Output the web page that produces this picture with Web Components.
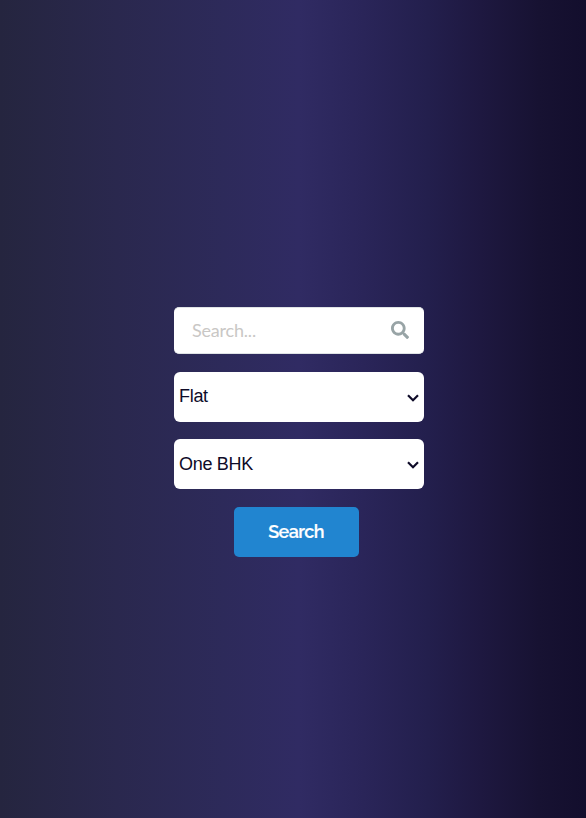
<!DOCTYPE html>
<html lang="en">
<head>
<meta charset="utf-8">
<title>Search</title>
<style>
html, body { margin: 0; height: 100%; }
body { overflow: hidden; background: #24243e; }
</style>
</head>
<body>
<search-panel>
  <search-field placeholder="Search..."></search-field>
  <option-field style="--lift: -3px">Flat</option-field>
  <option-field>One BHK</option-field>
  <submit-button>Search</submit-button>
</search-panel>
<script>
function define(name, html) {
  const template = document.createElement('template');
  template.innerHTML = html;
  customElements.define(name, class extends HTMLElement {
    constructor() {
      super();
      this.attachShadow({ mode: 'open' }).append(template.content.cloneNode(true));
    }
    connectedCallback() {
      const label = this.shadowRoot.querySelector('.placeholder');
      if (label) label.textContent = this.getAttribute('placeholder');
    }
  });
}

define('search-panel', `
<style>
:host { display: block; box-sizing: border-box; height: 818px; padding: 307px 162px 0 174px;
  background: linear-gradient(to right, #25253f 0%, #2a284e 20%, #2d2a5a 38%, #302b63 51%, #2a2559 62%, #231f4d 73%, #1e1840 82%, #171232 92%, #130e2d 100%); }
.stack { display: flex; flex-direction: column; }
</style>
<div class="stack"><slot></slot></div>`);

define('search-field', `
<style>
:host { display: flex; align-items: center; justify-content: space-between; box-sizing: border-box;
  width: 250px; height: 47px; margin-bottom: 18px; padding: 0 15px 0 18px;
  background: #fff; border: 1px solid #dfe3e5; border-width: 1px 0; border-radius: 5px;
  font: 18px/24px Lato, sans-serif; color: #c9c7c5; }
.placeholder { letter-spacing: -0.2px; margin-top: -2px; }
svg { display: block; width: 18px; height: 18px; margin-top: -1px; }
</style>
<span class="placeholder"></span>
<svg viewBox="0 0 512 512" fill="#98a4a6"><path d="M505 442.700 405.300 343c-4.500-4.500-10.600-7-17-7H372c27.600-35.300 44-79.700 44-128C416 93.100 322.900 0 208 0S0 93.100 0 208s93.100 208 208 208c48.300 0 92.700-16.400 128-44v16.300c0 6.400 2.500 12.500 7 17l99.700 99.700c9.400 9.400 24.600 9.400 33.900 0l28.300-28.300c9.400-9.400 9.400-24.600.1-34zM208 336c-70.700 0-128-57.200-128-128S137.200 80 208 80s128 57.200 128 128-57.200 128-128 128z"/></svg>`);

define('option-field', `
<style>
:host { display: flex; align-items: center; justify-content: space-between; box-sizing: border-box;
  width: 250px; height: 50px; margin-bottom: 17px; padding: 0 5px;
  background: #fff; border-radius: 6px;
  font: 18px/20px "Liberation Sans", Arial, sans-serif; letter-spacing: -0.3px; color: #0e0b28; }
:host(:nth-of-type(2)) { margin-bottom: 18px; }
.value { margin-top: var(--lift, -1px); }
svg { display: block; width: 12px; height: 8px; margin-top: 2px; }
</style>
<span class="value"><slot></slot></span>
<svg viewBox="0 0 12 8" fill="none" stroke="#0e0b28" stroke-width="2.200"><path d="M1 1.200 6 6.200 11 1.200"/></svg>`);

define('submit-button', `
<style>
:host { display: flex; align-items: center; justify-content: center; box-sizing: border-box;
  width: 125px; height: 50px; margin-left: 60px; padding-right: 1px;
  background: #2185d0; border-radius: 5px;
  font: 600 18px/22px Raleway, Inter, sans-serif; letter-spacing: -0.6px; color: #fff;
  -webkit-text-stroke: 0.2px #fff; }
</style>
<slot></slot>`);
</script>
</body>
</html>
